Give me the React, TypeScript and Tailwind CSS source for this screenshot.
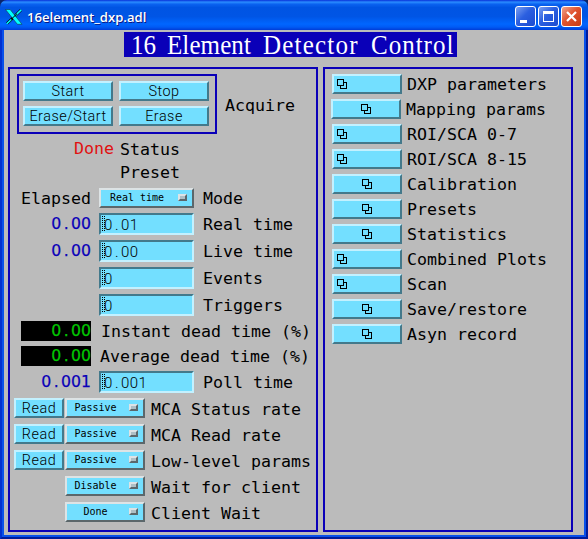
import React from "react";

const label =
  "font-['DejaVu_Sans_Mono','Liberation_Mono',monospace] text-[16.61px] leading-[22px] h-[22px] whitespace-pre";

const raised =
  "box-border border-2 border-t-[#c3f1ff] border-l-[#c3f1ff] border-r-[#43798b] border-b-[#43798b] bg-[#73dfff]";

// Fixed-pitch number: the decimal point takes a whole character cell.
function Num({ value, small }: { value: string; small?: boolean }) {
  const [whole, frac] = value.split(".");
  return (
    <>
      {whole}
      {frac !== undefined && (
        <span className={small ? "px-[2.2px]" : "px-[2.4px]"}>.</span>
      )}
      {frac}
    </>
  );
}

function PushButton({ text, width }: { text: string; width: string }) {
  return (
    <button
      className={`${raised} ${width} h-5 pt-0.5 flex items-center justify-center font-['Roboto','DejaVu_Sans',sans-serif] font-light text-[14.4px] tracking-[0.5px] leading-4 text-black whitespace-nowrap`}
    >
      {text}
    </button>
  );
}

function OptionMenu({ text, wide }: { text: string; wide?: boolean }) {
  return (
    <button
      className={`${wide ? "w-[95px]" : "w-20"} h-5 box-border border-2 border-t-[#dde3e5] border-l-[#dde3e5] border-r-[#5b676b] border-b-[#5b676b] bg-[#73dfff] flex items-center pr-[5px] font-['DejaVu_Sans_Mono',monospace] text-[10px] leading-4 text-black`}
    >
      <span className="flex-1 text-center whitespace-pre pr-[5px]">{text}</span>
      <span className="w-[9px] h-[7px] -mt-px border-2 border-t-[#dde3e5] border-l-[#dde3e5] border-r-[#5b676b] border-b-[#5b676b] bg-[#aebfc5]" />
    </button>
  );
}

function Field({ value }: { value: string }) {
  return (
    <div className="w-[95px] h-[22px] shrink-0 box-border border-2 border-t-[#43798b] border-l-[#43798b] border-r-[#c3f1ff] border-b-[#c3f1ff] bg-[#73dfff] flex items-center">
      <span className="w-[3px] h-4 ml-px -mr-px flex justify-between">
        <span className="w-px bg-[repeating-linear-gradient(180deg,#000_0_1px,transparent_1px_2px)]" />
        <span className="w-px bg-[repeating-linear-gradient(180deg,#000_0_1px,transparent_1px_2px)]" />
      </span>
      <span className="pt-px font-['Roboto','DejaVu_Sans',sans-serif] font-light text-[15px] tracking-[0.4px] leading-[18px] text-black">
        <Num value={value} small />
      </span>
    </div>
  );
}

function Elapsed({ value }: { value?: string }) {
  return (
    <div className="w-[81px] shrink-0 text-right text-[#0a00b8] font-['DejaVu_Sans',sans-serif] text-[15.7px] leading-5 [-webkit-text-stroke:0.25px]">
      {value && <Num value={value} />}
    </div>
  );
}

function ValueRow({ elapsed, value, name }: { elapsed?: string; value: string; name: string }) {
  return (
    <div className="flex items-center h-[22px]">
      <Elapsed value={elapsed} />
      <div className="w-2" />
      <Field value={value} />
      <span className={`${label} ml-[9px] mt-0.5`}>{name}</span>
    </div>
  );
}

function DeadTime({ name, gap }: { name: string; gap: string }) {
  return (
    <div className="flex h-5">
      <div className="ml-[11px] w-[70px] bg-black text-right text-[#00c800] font-['DejaVu_Sans',sans-serif] text-[15.7px] leading-5 [-webkit-text-stroke:0.25px]">
        <Num value="0.00" />
      </div>
      <span className={`${label} ${gap}`}>{name}</span>
    </div>
  );
}

function RateRow({ read, option, name }: { read?: boolean; option: string; name: string }) {
  return (
    <div className="flex h-5">
      <div className="w-[51px] ml-1">{read && <PushButton text="Read" width="w-[50px]" />}</div>
      <OptionMenu text={option} />
      <span className={`${label} ml-1.5 mt-px`}>{name}</span>
    </div>
  );
}

const links = [
  { name: "DXP parameters", left: true },
  { name: "Mapping params", left: false, shift: true },
  { name: "ROI/SCA 0-7", left: true },
  { name: "ROI/SCA 8-15", left: true },
  { name: "Calibration", left: false },
  { name: "Presets", left: false },
  { name: "Statistics", left: false },
  { name: "Combined Plots", left: true },
  { name: "Scan", left: true },
  { name: "Save/restore", left: false },
  { name: "Asyn record", left: false },
];

function Related() {
  return (
    <svg width="10" height="10" viewBox="0 0 10 10" fill="none" stroke="#000" shapeRendering="crispEdges">
      <path d="M6.5 3.5h3v6h-6v-3" />
      <path d="M.5 .5h6v6h-6z" />
    </svg>
  );
}

const xp =
  "w-[21px] h-[21px] rounded-[3px] border border-white flex items-center justify-center";

export default function App() {
  return (
    <div className="w-[588px] h-[539px] bg-[#0a246a] flex flex-col overflow-hidden">
      <header className="h-[30px] shrink-0 flex items-center rounded-t-[7px] bg-[linear-gradient(180deg,#0831d9_0%,#2a8cff_7%,#0a62f0_14%,#0054e3_25%,#0055e5_55%,#0066ff_80%,#005bf5_90%,#003dd7_100%)] pl-[5px] pr-[6px] pt-[3px]">
        <svg width="18" height="16" viewBox="0 0 18 16">
          <path d="M16 1L2 14.5" stroke="#000" strokeWidth="2.6" />
          <path d="M16.2 .8L10.5 6.3M6.5 10.2L1.8 14.8" stroke="#00ffff" strokeWidth="1.6" />
          <path d="M.5 .5h4.6L17 15.3h-4.6z" fill="#00ffff" stroke="#222" strokeWidth=".5" />
          <path d="M12 4.7L5.8 10.7" stroke="#000" strokeWidth="1" />
        </svg>
        <span className="ml-1 flex-1 text-white font-['Open_Sans','Noto_Sans',sans-serif] font-semibold text-[13.1px] leading-4 [text-shadow:1px_1px_0_#0a1883]">
          16element_dxp.adl
        </span>
        <div className="flex gap-0.5">
          <div className={`${xp} bg-[linear-gradient(135deg,#7b9ff0,#2b5fe0_45%,#1c4bd0)]`}>
            <span className="w-[7px] h-[3px] bg-white mt-[9px] mr-[5px]" />
          </div>
          <div className={`${xp} bg-[linear-gradient(135deg,#7b9ff0,#2b5fe0_45%,#1c4bd0)]`}>
            <span className="w-[11px] h-[11px] border border-t-[3px] border-white" />
          </div>
          <div className={`${xp} bg-[linear-gradient(135deg,#f0a48e,#e0532f_45%,#c93c14)]`}>
            <svg width="11" height="11" viewBox="0 0 11 11" stroke="#fff" strokeWidth="2.2">
              <path d="M1 1l9 9M10 1L1 10" />
            </svg>
          </div>
        </div>
      </header>

      <div className="flex-1 min-h-0 border-x-2 border-b-2 border-l-[#0030d0] border-r-[#001b9a] border-b-[#001b9a] flex">
        <div className="flex-1 border-x-2 border-b-2 border-[#0850ea] bg-[#bbbbbb]">
          <div className="ml-[120px] mt-0.5 w-[333px] h-[25px] bg-[#0a00b8]">
            <h1 className="pl-[7px] flex text-white font-['Liberation_Serif',serif] text-[25px] leading-[25px] whitespace-pre scale-y-[1.08]">
              <span className="w-9">16 </span>
              <span className="w-24 tracking-[0.1px]">Element </span>
              <span className="w-[108px] tracking-[1.2px]">Detector </span>
              <span className="w-[84px] tracking-[1px]">Control</span>
            </h1>
          </div>

          <div className="flex items-start gap-[5px] ml-1 mt-[10px]">
            <section className="w-[310px] h-[465px] shrink-0 border-2 border-[#0a00b8]">
              <div className="flex mt-[5px] ml-[7px]">
                <div className="w-[200px] h-[60px] border-2 border-[#0a00b8] grid grid-cols-2 gap-x-1.5 gap-y-[5px] pl-1 pt-[5px] pr-1.5 content-start">
                  <PushButton text="Start" width="w-[90px]" />
                  <PushButton text="Stop" width="w-[90px]" />
                  <PushButton text="Erase/Start" width="w-[90px]" />
                  <PushButton text="Erase" width="w-[90px]" />
                </div>
                <span className={`${label} ml-2 mt-[21px]`}>Acquire</span>
              </div>

              <div className="flex h-5 mt-[5px] ml-16 gap-1.5">
                <span className={`${label} text-[#e01010] -mt-px`}>Done</span>
                <span className={label}>Status</span>
              </div>
              <div className="flex h-5 ml-[110px] mt-[3px]">
                <span className={label}>Preset</span>
              </div>

              <div className="flex mt-[6px] h-5">
                <span className={`${label} ml-[11px] w-[78px]`}>Elapsed</span>
                <OptionMenu text="Real time" wide />
                <span className={`${label} ml-[9px]`}>Mode</span>
              </div>

              <div className="flex flex-col gap-[5px] mt-[5px]">
                <ValueRow elapsed="0.00" value="0.01" name="Real time" />
                <ValueRow elapsed="0.00" value="0.00" name="Live time" />
                <ValueRow value="0" name="Events" />
                <ValueRow value="0" name="Triggers" />
                <DeadTime name="Instant dead time (%)" gap="ml-[10px]" />
                <DeadTime name="Average dead time (%)" gap="ml-[9px]" />
                <ValueRow elapsed="0.001" value="0.001" name="Poll time" />
              </div>

              <div className="flex flex-col gap-1.5 mt-[5px]">
                <RateRow read option="Passive" name="MCA Status rate" />
                <RateRow read option="Passive" name="MCA Read rate" />
                <RateRow read option="Passive" name="Low-level params" />
                <RateRow option="Disable" name="Wait for client" />
                <RateRow option="Done" name="Client Wait" />
              </div>
            </section>

            <section className="w-[250px] h-[465px] shrink-0 border-2 border-[#0a00b8] pt-[5px] pl-[7px] flex flex-col gap-[5px]">
              {links.map((l) => (
                <div key={l.name} className={`flex h-5 ${l.shift ? "-ml-px" : ""}`}>
                  <button
                    className={`${raised} w-[70px] h-5 flex items-center ${l.left ? "pl-[3px]" : "justify-center"}`}
                  >
                    <Related />
                  </button>
                  <span className={`${label} ml-[5px]`}>{l.name}</span>
                </div>
              ))}
            </section>
          </div>
        </div>
      </div>
    </div>
  );
}
